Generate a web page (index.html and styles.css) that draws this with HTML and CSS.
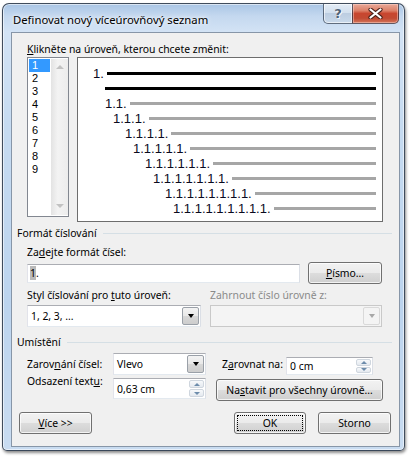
FILE: index.html
```html
<!DOCTYPE html>
<html lang="cs">
<head>
<meta charset="utf-8">
<title>Definovat nový víceúrovňový seznam</title>
<link rel="stylesheet" href="styles.css">
</head>
<body>
<div class="window">
  <div class="titlebar">
    <div class="title">Definovat nový víceúrovňový seznam</div>
    <div class="caption-btns">
      <div class="cap help"><span class="q">?</span></div>
      <div class="cap close">
        <svg width="15" height="11" viewBox="0 0 15 11">
          <path d="M2.5 1.5 L12.5 9.5 M12.5 1.5 L2.5 9.5" stroke="#4a2018" stroke-width="4.2" stroke-linecap="round" fill="none"/>
          <path d="M2.5 1.5 L12.5 9.5 M12.5 1.5 L2.5 9.5" stroke="#ffffff" stroke-width="2.2" stroke-linecap="round" fill="none"/>
        </svg>
      </div>
    </div>
  </div>
  <div class="client">
    <div class="lbl top-lbl"><u>K</u>likněte na úroveň, kterou chcete změnit:</div>
    <div class="pick-row">
      <div class="listbox">
        <div class="items">
          <div class="item sel">1</div>
          <div class="item">2</div>
          <div class="item">3</div>
          <div class="item">4</div>
          <div class="item">5</div>
          <div class="item">6</div>
          <div class="item">7</div>
          <div class="item">8</div>
          <div class="item">9</div>
        </div>
        <div class="vscroll">
          <span class="sarrow up"></span>
          <span class="sarrow down"></span>
        </div>
      </div>
      <div class="preview">
        <div class="prow lv1"><span class="num">1.</span><i class="bar dark"></i></div>
        <div class="prow lv1b"><i class="bar dark"></i></div>
        <div class="prow lv2"><span class="num">1.1.</span><i class="bar"></i></div>
        <div class="prow lv3"><span class="num">1.1.1.</span><i class="bar"></i></div>
        <div class="prow lv4"><span class="num">1.1.1.1.</span><i class="bar"></i></div>
        <div class="prow lv5"><span class="num">1.1.1.1.1.</span><i class="bar"></i></div>
        <div class="prow lv6"><span class="num">1.1.1.1.1.1.</span><i class="bar"></i></div>
        <div class="prow lv7"><span class="num">1.1.1.1.1.1.1.</span><i class="bar"></i></div>
        <div class="prow lv8"><span class="num">1.1.1.1.1.1.1.1.</span><i class="bar"></i></div>
        <div class="prow lv9"><span class="num">1.1.1.1.1.1.1.1.1.</span><i class="bar"></i></div>
      </div>
    </div>

    <div class="group-head g1"><span>Formát číslování</span><i class="rule"></i></div>
    <div class="lbl sub-lbl">Za<u>d</u>ejte formát čísel:</div>
    <div class="fmt-row">
      <div class="textbox fmt"><span class="selrange">1</span>.</div>
      <div class="btn pismo"><span><u>P</u>ísmo…</span></div>
    </div>
    <div class="two-lbl">
      <div class="lbl col-a">Styl číslování pro <u>t</u>uto úroveň:</div>
      <div class="lbl col-b disabled">Zahrnout číslo úrovně z:</div>
    </div>
    <div class="two-sel">
      <div class="combo style-combo"><span class="cval">1, 2, 3, ...</span><span class="ddbtn"><i class="tri"></i></span></div>
      <div class="combo dis-combo"><span class="cval"></span><span class="ddbtn"><i class="tri"></i></span></div>
    </div>

    <div class="group-head g2"><span>Umístění</span><i class="rule"></i></div>
    <div class="pos-row ra">
      <div class="lbl plbl">Zarov<u>n</u>ání čísel:</div>
      <div class="combo align-combo"><span class="cval">Vlevo</span><span class="ddbtn"><i class="tri"></i></span></div>
      <div class="lbl plbl2">Z<u>a</u>rovnat na:</div>
      <div class="spin spin-small"><span class="sval">0 cm</span><span class="spinbtns"><span class="sb"><i class="up"></i></span><span class="sb"><i class="dn"></i></span></span></div>
    </div>
    <div class="pos-row rb">
      <div class="lbl plbl top">Odsazení text<u>u</u>:</div>
      <div class="spin spin-indent"><span class="sval">0,63 cm</span><span class="spinbtns"><span class="sb"><i class="up"></i></span><span class="sb"><i class="dn"></i></span></span></div>
      <div class="btn all-btn"><span>Na<u>s</u>tavit pro všechny úrovně…</span></div>
    </div>

    <div class="bottom-row">
      <div class="btn more"><span><u>V</u>íce &gt;&gt;</span></div>
      <div class="btn ok default"><span>OK</span></div>
      <div class="btn storno"><span>Storno</span></div>
    </div>
  </div>
</div>
</body>
</html>
```

FILE: styles.css
```css
html, body {
  margin: 0;
  padding: 0;
  background: #ffffff;
}
body {
  width: 410px;
  height: 457px;
  overflow: hidden;
  font-family: "Noto Sans", "Open Sans", sans-serif;
  font-size: 10.4px;
  color: #000;
}
u { text-decoration: underline; text-underline-offset: 1px; }

.window {
  box-sizing: border-box;
  margin: 3px 0 0 2px;
  width: 403px;
  height: 448px;
  border: 1px solid rgba(30, 40, 55, 0.8);
  border-radius: 7px 7px 5px 5px;
  background: linear-gradient(180deg, #a9c5e5 0px, #c4d8ef 12px, #d3e3f5 28px, #c6dbf1 120px, #bcd4ee 300px, #c9dcf1 448px);
  box-shadow: 1px 2px 3px rgba(0, 0, 0, 0.45), inset 0 0 0 1px rgba(255, 255, 255, 0.55);
  padding: 0 4px 3px 8px;
  display: flex;
  flex-direction: column;
}

.titlebar {
  height: 28px;
  display: flex;
  align-items: flex-start;
  flex: none;
}
.title {
  padding: 8px 0 0 2px;
  line-height: 16px;
  font-size: 11.3px;
  color: #000;
  text-shadow: 0 0 6px rgba(255, 255, 255, 0.95), 0 0 3px rgba(255, 255, 255, 0.9);
}
.caption-btns {
  margin-left: auto;
  margin-right: 1px;
  display: flex;
  height: 20px;
}
.cap {
  box-sizing: border-box;
  height: 20px;
  display: flex;
  align-items: center;
  justify-content: center;
  border: 1px solid rgba(40, 55, 75, 0.7);
  border-top: none;
}
.help {
  width: 29px;
  border-right: none;
  border-radius: 0 0 0 5px;
  background: linear-gradient(180deg, #e3ecf6 0%, #d3e0ee 45%, #bccde1 50%, #c9d9ea 100%);
  box-shadow: inset 0 0 0 1px rgba(255, 255, 255, 0.6);
}
.help .q {
  font-family: "DejaVu Sans", sans-serif;
  font-weight: bold;
  font-size: 13px;
  line-height: 13px;
  color: #4f6277;
  text-shadow: 0 0 1px #fff, 1px 1px 0 rgba(255,255,255,0.8);
}
.close {
  width: 47px;
  border-radius: 0 0 5px 0;
  background: linear-gradient(180deg, #e9a999 0%, #dc8068 35%, #c8462f 50%, #c24a32 75%, #d3765c 100%);
  box-shadow: inset 0 0 0 1px rgba(255, 220, 210, 0.45);
}
.close svg { display: block; }

.client {
  flex: 1;
  box-sizing: border-box;
  border: 1px solid #8796a8;
  background: #f0f0f0;
  display: flex;
  flex-direction: column;
}

.lbl {
  line-height: 16px;
  white-space: nowrap;
}
.disabled { color: #8a8a8a; }

.top-lbl { margin: 8px 0 0 15px; height: 16px; }

.pick-row {
  margin-left: 15px;
  height: 165px;
  display: flex;
  gap: 8px;
  align-items: flex-start;
}
.listbox {
  box-sizing: border-box;
  width: 42px;
  height: 160px;
  border: 1px solid #828790;
  background: #fff;
  display: flex;
  padding: 1px 0 1px 1px;
}
.items { width: 21px; }
.item {
  height: 13px;
  line-height: 13px;
  padding-left: 3px;
  font-family: "Liberation Sans", Arial, sans-serif;
  font-size: 11px;
}
.item.sel { background: #3399ff; color: #fff; }
.vscroll {
  margin-left: auto;
  width: 17px;
  background: linear-gradient(90deg, #e3e3e3, #f3f3f3 40%, #ececec);
  display: flex;
  flex-direction: column;
  justify-content: space-between;
  align-items: center;
  padding: 6px 0 7px;
  box-sizing: border-box;
}
.sarrow {
  width: 0;
  height: 0;
  border-left: 4px solid transparent;
  border-right: 4px solid transparent;
}
.sarrow.up { border-bottom: 4px solid #c2c2c2; }
.sarrow.down { border-top: 4px solid #c2c2c2; }

.preview {
  box-sizing: border-box;
  width: 306px;
  height: 165px;
  border: 1px solid #6d6d6d;
  background: #fff;
  padding: 8px 6px 0 0;
}
.prow {
  height: 15px;
  display: flex;
  align-items: center;
}
.num {
  font-family: "Liberation Sans", Arial, sans-serif;
  font-size: 13px;
  line-height: 15px;
  color: #0a0a1e;
}
.bar {
  flex: 1;
  height: 3px;
  margin-left: 3px;
  background: #a6a6a6;
}
.bar.dark { background: #000; }
.lv1 { padding-left: 15px; }
.lv1b { padding-left: 24px; }
.lv2 { padding-left: 27px; }
.lv3 { padding-left: 35px; }
.lv4 { padding-left: 47px; }
.lv5 { padding-left: 55px; }
.lv6 { padding-left: 67px; }
.lv7 { padding-left: 75px; }
.lv8 { padding-left: 87px; }
.lv9 { padding-left: 95px; }

.group-head {
  display: flex;
  align-items: center;
  height: 16px;
  line-height: 16px;
  padding-left: 5px;
  margin-right: 7px;
}
.group-head .rule {
  flex: 1;
  height: 1px;
  background: #d5dfe5;
  margin-left: 6px;
}
.g1 { margin-top: 3px; }
.g2 { margin-top: 7px; }

.sub-lbl { margin: 3px 0 0 15px; height: 16px; }

.fmt-row {
  margin: 2px 0 0 15px;
  height: 22px;
  display: flex;
  gap: 8px;
}
.textbox {
  box-sizing: border-box;
  background: #fff;
  border: 1px solid;
  border-color: #abadb3 #dbdfe6 #e3e9ef #e2e3ea;
}
.fmt {
  width: 273px;
  height: 19px;
  margin-top: 2px;
  line-height: 17px;
  padding-left: 2px;
}
.selrange { background: #b9b9b9; }

.btn {
  position: relative;
  box-sizing: border-box;
  height: 22px;
  border: 1px solid #707070;
  border-radius: 3px;
  background: linear-gradient(180deg, #f2f2f2 0%, #ebebeb 48%, #dddddd 50%, #cfcfcf 100%);
  box-shadow: inset 0 0 0 1px rgba(255, 255, 255, 0.75);
  display: flex;
  align-items: center;
  justify-content: center;
  line-height: 16px;
  white-space: nowrap;
}
.pismo { width: 74px; }

.two-lbl {
  margin: 3px 0 0 15px;
  display: flex;
  height: 16px;
}
.col-a { width: 183px; }

.two-sel {
  margin: 2px 0 0 15px;
  display: flex;
  gap: 9px;
  height: 22px;
}
.combo {
  box-sizing: border-box;
  height: 22px;
  border: 1px solid;
  border-color: #abadb3 #dbdfe6 #e3e9ef #e2e3ea;
  background: #fff;
  display: flex;
  align-items: center;
  padding: 1px;
}
.cval { flex: 1; padding-left: 2px; line-height: 16px; }
.ddbtn {
  box-sizing: border-box;
  width: 17px;
  height: 18px;
  border: 1px solid #9aa0a8;
  border-radius: 2px;
  background: linear-gradient(180deg, #f3f3f3 0%, #e8e8e8 50%, #d8d8d8 51%, #cdcdcd 100%);
  display: flex;
  align-items: center;
  justify-content: center;
}
.tri {
  width: 0;
  height: 0;
  border-left: 3.5px solid transparent;
  border-right: 3.5px solid transparent;
  border-top: 4px solid #000;
}
.style-combo { width: 174px; }
.dis-combo {
  width: 172px;
  background: #f4f4f4;
  border-color: #c9c9c9;
}
.dis-combo .ddbtn {
  border-color: #d9d9d9;
  background: #f4f4f4;
}
.dis-combo .tri { border-top-color: #a8a8a8; }

.pos-row {
  margin-left: 15px;
  display: flex;
  align-items: center;
  height: 22px;
}
.ra { margin-top: 3px; }
.rb { margin-top: 3px; align-items: flex-start; }
.plbl { width: 86px; }
.plbl.top { margin-top: -5px; }
.align-combo { width: 93px; }
.plbl2 { margin-left: 16px; width: 64px; }

.spin {
  box-sizing: border-box;
  border: 1px solid;
  border-color: #abadb3 #dbdfe6 #e3e9ef #e2e3ea;
  background: #fff;
  display: flex;
  padding: 1px;
}
.sval { flex: 1; padding-left: 2px; display: flex; align-items: center; }
.spinbtns {
  width: 15px;
  display: flex;
  flex-direction: column;
  gap: 1px;
}
.sb {
  flex: 1;
  border: 1px solid #cfd6de;
  border-radius: 2px;
  background: linear-gradient(180deg, #f7f9fb, #e4e9ef);
  display: flex;
  align-items: center;
  justify-content: center;
}
.sb .up, .sb .dn {
  width: 0;
  height: 0;
  border-left: 3px solid transparent;
  border-right: 3px solid transparent;
}
.sb .up { border-bottom: 3px solid #6d8cab; }
.sb .dn { border-top: 3px solid #6d8cab; }
.spin-small { width: 87px; height: 18px; align-self: flex-end; }
.spin-indent { width: 93px; height: 21px; }
.all-btn { width: 167px; margin-left: 10px; margin-top: 1px; }

.bottom-row {
  margin-top: 12px;
  display: flex;
  height: 22px;
  padding-left: 7px;
}
.more { width: 73px; }
.ok { width: 72px; margin-left: 142px; }
.ok.default::after {
  content: "";
  position: absolute;
  left: 2px;
  right: 2px;
  top: 2px;
  bottom: 2px;
  border: 1px dotted #000;
}
.storno { width: 73px; margin-left: 12px; }
```
